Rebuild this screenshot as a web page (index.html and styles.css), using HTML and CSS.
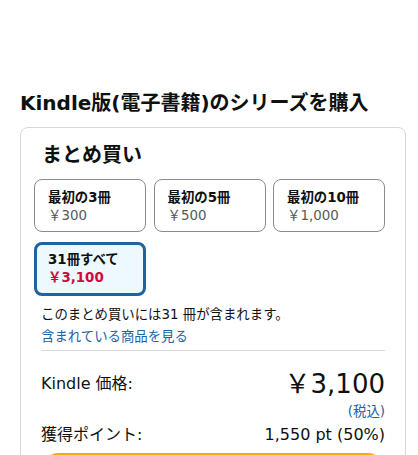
FILE: index.html
```html
<!DOCTYPE html>
<html lang="ja">
<head>
<meta charset="utf-8">
<link rel="stylesheet" href="styles.css">
</head>
<body>
<div class="page">
  <h2 class="heading">Kindle版(電子書籍)のシリーズを購入</h2>
  <div class="card">
    <h3 class="card-title">まとめ買い</h3>
    <div class="options">
      <div class="option">
        <div class="opt-label">最初の3冊</div>
        <div class="opt-price">￥300</div>
      </div>
      <div class="option">
        <div class="opt-label">最初の5冊</div>
        <div class="opt-price">￥500</div>
      </div>
      <div class="option">
        <div class="opt-label">最初の10冊</div>
        <div class="opt-price">￥1,000</div>
      </div>
      <div class="option selected">
        <div class="opt-label">31冊すべて</div>
        <div class="opt-price">￥3,100</div>
      </div>
    </div>
    <div class="info">
      <div class="info-text">このまとめ買いには31 冊が含まれます。</div>
      <a class="info-link" href="#">含まれている商品を見る</a>
      <div class="divider"></div>
      <div class="price-row">
        <span class="row-label">Kindle 価格:</span>
        <span class="big-price">￥3,100</span>
      </div>
      <div class="tax">(税込)</div>
      <div class="points-row">
        <span class="row-label">獲得ポイント:</span>
        <span class="points">1,550 pt (50%)</span>
      </div>
      <div class="buy-btn"></div>
    </div>
  </div>
</div>
</body>
</html>
```
FILE: styles.css
```css
html, body {
  margin: 0;
  padding: 0;
  background: #ffffff;
}
body {
  font-family: "DejaVu Sans", "Noto Sans CJK JP", sans-serif;
  color: #0f1111;
}
.page {
  padding: 89px 12px 0 20px;
}
.heading {
  margin: 0 0 10px 0;
  font-size: 20px;
  line-height: 28px;
  font-weight: 700;
}
.card {
  border: 1px solid #d5d9d9;
  border-radius: 8px;
  padding: 13px 20px 0 13px;
  height: 360px;
}
.card-title {
  margin: 0 0 10px 8px;
  font-size: 20px;
  line-height: 28px;
  font-weight: 700;
}
.options {
  display: grid;
  grid-template-columns: repeat(3, 1fr);
  column-gap: 7.5px;
  row-gap: 10px;
}
.option {
  border: 1px solid #888c8c;
  border-radius: 8px;
  padding: 9px 12px 6px 13px;
  font-size: 13.4px;
  line-height: 18px;
}
.opt-label {
  font-weight: 700;
}
.opt-price {
  color: #565959;
}
.option.selected {
  border: 3px solid #2162a1;
  background: #edf8ff;
  padding: 6px 10px 6px 11px;
}
.option.selected .opt-price {
  color: #cc0c39;
  font-weight: 700;
}
.info {
  padding: 7.5px 0 0 7px;
}
.info-text {
  font-size: 13.4px;
  line-height: 22px;
}
.info-link {
  display: block;
  font-size: 13.4px;
  line-height: 22px;
  color: #2162a1;
  text-decoration: none;
}
.divider {
  margin-top: 2px;
  height: 1px;
  background: #d5d9d9;
}
.price-row {
  display: flex;
  justify-content: space-between;
  align-items: center;
  padding-top: 18px;
}
.row-label {
  font-size: 16px;
  line-height: 22px;
}
.big-price {
  font-size: 26px;
  line-height: 30px;
}
.tax {
  margin-top: 4px;
  text-align: right;
  font-size: 13.4px;
  line-height: 18px;
  color: #2162a1;
}
.points-row {
  display: flex;
  justify-content: space-between;
  align-items: center;
  margin-top: 3px;
}
.points {
  font-size: 16px;
  line-height: 22px;
}
.buy-btn {
  margin-top: 7px;
  height: 36px;
  border-radius: 18px;
  background: #ffa41c;
}
```
